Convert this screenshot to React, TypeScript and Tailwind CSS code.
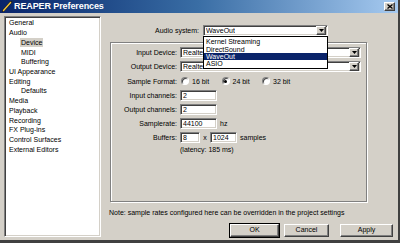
import React from "react";

const sunken =
  "border border-t-[#808080] border-l-[#808080] border-b-white border-r-white shadow-[inset_1px_1px_0_#404040,inset_-1px_-1px_0_#d4d0c8]";
const raised =
  "border border-t-white border-l-white border-b-[#404040] border-r-[#404040] shadow-[inset_-1px_-1px_0_#808080]";

function Arrow() {
  return (
    <div className={`w-[10px] h-[9px] bg-[#d4d0c8] flex items-center justify-center ${raised}`}>
      <svg width="5" height="3" viewBox="0 0 5 3">
        <path d="M0 0h5L2.5 3z" fill="#000" />
      </svg>
    </div>
  );
}

function Combo({ text, w, clip }: { text: string; w: number; clip?: number }) {
  return (
    <div
      className={`h-[11px] bg-white flex items-center justify-between pl-[2px] pr-[1px] ${sunken}`}
      style={{ width: w }}
    >
      <div className="overflow-hidden whitespace-nowrap leading-none" style={clip ? { width: clip } : undefined}>
        {text}
      </div>
      <Arrow />
    </div>
  );
}

function Field({ text, w }: { text: string; w: number }) {
  return (
    <div className={`h-[11px] bg-white flex items-center pl-[2px] ${sunken}`} style={{ width: w }}>
      <span className="leading-none">{text}</span>
    </div>
  );
}

function Radio({ label, checked }: { label: string; checked?: boolean }) {
  return (
    <div className="flex items-center gap-[3px] w-[40.5px]">
      <div className="w-[8px] h-[8px] rounded-full bg-white border border-t-[#808080] border-l-[#808080] border-b-white border-r-white shadow-[inset_1px_1px_0_#404040] flex items-center justify-center">
        {checked && <div className="w-[3px] h-[3px] rounded-full bg-black" />}
      </div>
      <span className="leading-none">{label}</span>
    </div>
  );
}

function Row({ label, h, children }: { label: string; h: number; children?: React.ReactNode }) {
  return (
    <div className="flex items-center gap-[3px]" style={{ height: h }}>
      <div className="w-[66px] text-right leading-none whitespace-nowrap">{label}</div>
      <div className="flex items-center">{children}</div>
    </div>
  );
}

const tree: { t: string; i?: boolean; sel?: boolean }[] = [
  { t: "General" },
  { t: "Audio" },
  { t: "Device", i: true, sel: true },
  { t: "MIDI", i: true },
  { t: "Buffering", i: true },
  { t: "UI Appearance" },
  { t: "Editing" },
  { t: "Defaults", i: true },
  { t: "Media" },
  { t: "Playback" },
  { t: "Recording" },
  { t: "FX Plug-ins" },
  { t: "Control Surfaces" },
  { t: "External Editors" },
];

export default function App() {
  return (
    <div className="w-[400px] h-[243px] overflow-hidden flex flex-col bg-[#d4d0c8] text-[7px] text-black font-['Liberation_Sans',Arial,sans-serif] border-b-[3px] border-b-[#404040] border-r-[2px] border-r-[#404040]">
      {/* title bar */}
      <div className="h-[13px] shrink-0 flex items-center bg-gradient-to-r from-[#0a246a] via-[#3a6ea5] to-[#a6caf0] pl-[2px] pr-[2px]">
        <svg width="11" height="11" viewBox="0 0 11 11" className="mr-[1px]">
          <path d="M1 10 L9 1" stroke="#222" strokeWidth="2.6" strokeLinecap="round" />
          <path d="M1.5 9.5 L8.6 1.5" stroke="#f2c23a" strokeWidth="1.4" strokeLinecap="round" />
        </svg>
        <span className="text-white font-bold text-[9px] leading-none tracking-[-0.1px]">REAPER Preferences</span>
        <div className="flex-1" />
        <div className={`w-[11px] h-[9px] bg-[#d4d0c8] flex items-center justify-center ${raised} mr-[1px]`}>
          <svg width="6" height="5" viewBox="0 0 6 5">
            <path d="M0.5 0.5 L5.5 4.5 M5.5 0.5 L0.5 4.5" stroke="#000" strokeWidth="1.3" />
          </svg>
        </div>
      </div>

      {/* body */}
      <div className="flex-1 flex min-h-0 relative">
        {/* tree */}
        <div className="pl-[4px] pt-[3px] shrink-0">
          <div className={`w-[97px] h-[221px] bg-white ${sunken} pt-[1px]`}>
            {tree.map((it) => (
              <div key={it.t} className="h-[9.72px] flex items-center" style={{ paddingLeft: it.i ? 15 : 3 }}>
                <span className={`leading-none px-[1px] py-[1px] whitespace-nowrap ${it.sel ? "bg-[#d4d0c8]" : ""}`}>{it.t}</span>
              </div>
            ))}
          </div>
        </div>

        {/* right side */}
        <div className="flex-1 flex flex-col relative">
          <div className="pt-[11px] flex items-center gap-[4px] h-[23px]">
            <div className="w-[98px] text-right leading-none">Audio system:</div>
            <Combo text="WaveOut" w={125} />
          </div>

          {/* group box */}
          <div className="mt-[6px] ml-[9px] w-[257px] h-[160px] border border-[#808080] shadow-[inset_1px_1px_0_#fff,1px_1px_0_#fff] pt-[2px]">
            <Row label="Input Device:" h={14}>
              <Combo text="Realtek HD Audio Input" w={181} clip={21} />
            </Row>
            <Row label="Output Device:" h={14}>
              <Combo text="Realtek HD Audio output" w={181} clip={21} />
            </Row>
            <Row label="Sample Format:" h={16}>
              <div className="flex items-center pl-[1px]">
                <Radio label="16 bit" />
                <Radio label="24 bit" checked />
                <Radio label="32 bit" />
              </div>
            </Row>
            <Row label="Input channels:" h={13}>
              <Field text="2" w={37} />
            </Row>
            <Row label="Output channels:" h={14}>
              <Field text="2" w={37} />
            </Row>
            <Row label="Samplerate:" h={14}>
              <Field text="44100" w={37} />
              <span className="ml-[3px] leading-none">hz</span>
            </Row>
            <Row label="Buffers:" h={14}>
              <Field text="8" w={20} />
              <span className="w-[10px] text-center leading-none">x</span>
              <Field text="1024" w={27} />
              <span className="ml-[3px] leading-none">samples</span>
            </Row>
            <Row label="" h={10}>
              <span className="leading-none">(latency: 185 ms)</span>
            </Row>
          </div>

          <div className="mt-[5px] ml-[8px] h-[10px] flex items-center leading-none whitespace-nowrap">
            Note: sample rates configured here can be overridden in the project settings
          </div>

          <div className="mt-[7px] flex items-center h-[13px] pl-[129px]">
            <div className={`w-[49px] h-[13px] flex items-center justify-center outline outline-1 outline-black ${raised}`}>OK</div>
            <div className={`ml-[5px] w-[45px] h-[13px] flex items-center justify-center ${raised}`}>Cancel</div>
            <div className={`ml-[11px] w-[53px] h-[13px] flex items-center justify-center ${raised}`}>Apply</div>
          </div>

          {/* dropdown list */}
          <div className="absolute left-[102px] top-[23px] w-[125px] h-[33px] bg-white border border-black flex flex-col pt-[1px]">
            {["Kernel Streaming", "DirectSound", "WaveOut", "ASIO"].map((t) => (
              <div
                key={t}
                className={`h-[7.4px] flex items-center pl-[2px] leading-none whitespace-nowrap ${
                  t === "WaveOut" ? "bg-[#0a246a] text-white" : ""
                }`}
              >
                {t}
              </div>
            ))}
          </div>
        </div>
      </div>
    </div>
  );
}
